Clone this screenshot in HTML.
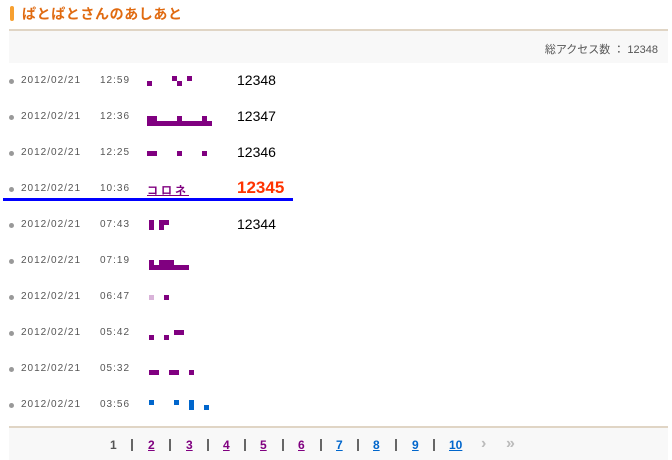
<!DOCTYPE html>
<html><head><meta charset="utf-8"><style>
*{margin:0;padding:0}
body{width:672px;height:460px;background:#fff;position:relative;overflow:hidden;font-family:"Liberation Sans","Noto Sans CJK JP",sans-serif}
.a{position:absolute}
.t{font-size:10px;color:#555;letter-spacing:1px}
.b{position:absolute;background:#800080}
.d{position:absolute;left:9px;width:5px;height:5px;border-radius:50%;background:#999}
.n{position:absolute;left:237px;font-size:14px;color:#000}
.pg{position:absolute;top:438px;font-size:12px;font-weight:bold;text-decoration:underline}
.sep{position:absolute;top:439px;width:2px;height:12px;background:#666}
</style></head><body>
<div class="a" style="left:10px;top:6px;width:4px;height:15px;background:#f7a030;border-radius:2px"></div>
<div class="a" style="left:22px;top:4px;font-size:14px;font-weight:bold;color:#e06a10;letter-spacing:0.6px">ぱとぱとさんのあしあと</div>
<div class="a" style="left:9px;top:29px;width:659px;height:2px;background:#e0d5c5"></div>
<div class="a" style="left:9px;top:31px;width:659px;height:32px;background:#f8f8f8"></div>
<div class="a" style="right:14px;top:41px;font-size:11px;color:#555">総アクセス数 ： 12348</div>

<div class="d" style="top:79px"></div><div class="a t" style="left:21px;top:75px">2012/02/21</div><div class="a t" style="left:100px;top:75px">12:59</div><div class="n" style="top:72px">12348</div>
<div class="d" style="top:115px"></div><div class="a t" style="left:21px;top:111px">2012/02/21</div><div class="a t" style="left:100px;top:111px">12:36</div><div class="n" style="top:108px">12347</div>
<div class="d" style="top:151px"></div><div class="a t" style="left:21px;top:147px">2012/02/21</div><div class="a t" style="left:100px;top:147px">12:25</div><div class="n" style="top:144px">12346</div>
<div class="d" style="top:187px"></div><div class="a t" style="left:21px;top:183px">2012/02/21</div><div class="a t" style="left:100px;top:183px">10:36</div>
<div class="a" style="left:147px;top:182px;font-size:11px;font-weight:bold;color:#800080;text-decoration:underline;letter-spacing:3px">コロネ</div>
<div class="a" style="left:237px;top:178px;font-size:17px;font-weight:bold;color:#ff3300">12345</div>
<div class="a" style="left:3px;top:198px;width:290px;height:3px;background:#0000ff"></div>
<div class="d" style="top:223px"></div><div class="a t" style="left:21px;top:219px">2012/02/21</div><div class="a t" style="left:100px;top:219px">07:43</div><div class="n" style="top:216px">12344</div>
<div class="d" style="top:259px"></div><div class="a t" style="left:21px;top:255px">2012/02/21</div><div class="a t" style="left:100px;top:255px">07:19</div>
<div class="d" style="top:295px"></div><div class="a t" style="left:21px;top:291px">2012/02/21</div><div class="a t" style="left:100px;top:291px">06:47</div>
<div class="d" style="top:331px"></div><div class="a t" style="left:21px;top:327px">2012/02/21</div><div class="a t" style="left:100px;top:327px">05:42</div>
<div class="d" style="top:367px"></div><div class="a t" style="left:21px;top:363px">2012/02/21</div><div class="a t" style="left:100px;top:363px">05:32</div>
<div class="d" style="top:403px"></div><div class="a t" style="left:21px;top:399px">2012/02/21</div><div class="a t" style="left:100px;top:399px">03:56</div>

<div class="b" style="left:147px;top:81px;width:5px;height:5px"></div>
<div class="b" style="left:172px;top:76px;width:5px;height:5px"></div>
<div class="b" style="left:177px;top:81px;width:5px;height:5px"></div>
<div class="b" style="left:187px;top:76px;width:5px;height:5px"></div>
<div class="b" style="left:147px;top:116px;width:10px;height:5px"></div>
<div class="b" style="left:147px;top:121px;width:65px;height:5px"></div>
<div class="b" style="left:177px;top:116px;width:5px;height:5px"></div>
<div class="b" style="left:202px;top:116px;width:5px;height:5px"></div>
<div class="b" style="left:147px;top:151px;width:10px;height:5px"></div>
<div class="b" style="left:177px;top:151px;width:5px;height:5px"></div>
<div class="b" style="left:202px;top:151px;width:5px;height:5px"></div>
<div class="b" style="left:149px;top:220px;width:5px;height:10px"></div>
<div class="b" style="left:159px;top:220px;width:10px;height:5px"></div>
<div class="b" style="left:159px;top:225px;width:5px;height:5px"></div>
<div class="b" style="left:149px;top:260px;width:5px;height:5px"></div>
<div class="b" style="left:159px;top:260px;width:15px;height:5px"></div>
<div class="b" style="left:149px;top:265px;width:40px;height:5px"></div>
<div class="b" style="left:149px;top:295px;width:5px;height:5px;background:#d9b3d9"></div>
<div class="b" style="left:164px;top:295px;width:5px;height:5px"></div>
<div class="b" style="left:149px;top:335px;width:5px;height:5px"></div>
<div class="b" style="left:164px;top:335px;width:5px;height:5px"></div>
<div class="b" style="left:174px;top:330px;width:10px;height:5px"></div>
<div class="b" style="left:149px;top:370px;width:10px;height:5px"></div>
<div class="b" style="left:169px;top:370px;width:10px;height:5px"></div>
<div class="b" style="left:189px;top:370px;width:5px;height:5px"></div>
<div class="b" style="left:149px;top:400px;width:5px;height:5px;background:#0066cc"></div>
<div class="b" style="left:174px;top:400px;width:5px;height:5px;background:#0066cc"></div>
<div class="b" style="left:189px;top:400px;width:5px;height:10px;background:#0066cc"></div>
<div class="b" style="left:204px;top:405px;width:5px;height:5px;background:#0066cc"></div>

<div class="a" style="left:9px;top:426px;width:659px;height:2px;background:#e0d5c5"></div>
<div class="a" style="left:9px;top:428px;width:659px;height:32px;background:#f8f8f8"></div>
<div class="pg" style="left:110px;color:#555;text-decoration:none">1</div>
<div class="sep" style="left:131px"></div><div class="pg" style="left:148px;color:#800080">2</div>
<div class="sep" style="left:169px"></div><div class="pg" style="left:186px;color:#800080">3</div>
<div class="sep" style="left:207px"></div><div class="pg" style="left:223px;color:#800080">4</div>
<div class="sep" style="left:244px"></div><div class="pg" style="left:260px;color:#800080">5</div>
<div class="sep" style="left:282px"></div><div class="pg" style="left:298px;color:#800080">6</div>
<div class="sep" style="left:320px"></div><div class="pg" style="left:336px;color:#0066cc">7</div>
<div class="sep" style="left:357px"></div><div class="pg" style="left:373px;color:#0066cc">8</div>
<div class="sep" style="left:395px"></div><div class="pg" style="left:412px;color:#0066cc">9</div>
<div class="sep" style="left:433px"></div><div class="pg" style="left:449px;color:#0066cc">10</div>
<div class="pg" style="left:481px;top:435px;color:#bbb;text-decoration:none;font-size:16px">›</div>
<div class="pg" style="left:506px;top:435px;color:#bbb;text-decoration:none;font-size:16px">»</div>
</body></html>
